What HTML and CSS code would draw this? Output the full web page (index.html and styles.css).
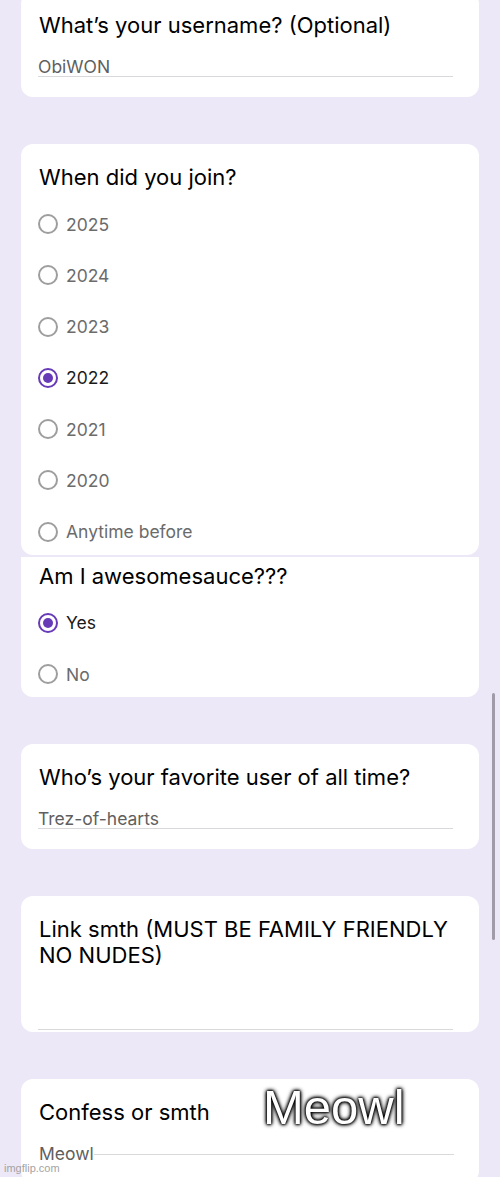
FILE: index.html
```html
<!DOCTYPE html>
<html lang="en">
<head>
    <meta charset="utf-8">
    <title>Form responses</title>
    <link rel="stylesheet" href="styles.css">
</head>
<body>
    <div class="page">
        <div class="card first">
            <div class="card-title">What’s your username? (Optional)</div>
            <div class="text-answer">ObiWON</div>
        </div>

        <div class="card cut-bottom">
            <div class="card-title">When did you join?</div>
            <div class="options">
                <div class="option"><span class="radio"></span>2025</div>
                <div class="option"><span class="radio"></span>2024</div>
                <div class="option"><span class="radio"></span>2023</div>
                <div class="option checked"><span class="radio"></span>2022</div>
                <div class="option"><span class="radio"></span>2021</div>
                <div class="option"><span class="radio"></span>2020</div>
                <div class="option"><span class="radio"></span>Anytime before</div>
            </div>
        </div>

        <div class="card cut-top">
            <div class="card-title">Am I awesomesauce???</div>
            <div class="options">
                <div class="option checked"><span class="radio"></span>Yes</div>
                <div class="option"><span class="radio"></span>No</div>
            </div>
        </div>

        <div class="card">
            <div class="card-title">Who’s your favorite user of all time?</div>
            <div class="text-answer">Trez-of-hearts</div>
        </div>

        <div class="card empty">
            <div class="card-title">Link smth (MUST BE FAMILY FRIENDLY NO NUDES)</div>
            <div class="text-answer"></div>
        </div>

        <div class="card">
            <div class="card-title">Confess or smth</div>
            <div class="inline-answer">
                <span class="inline-text">Meowl</span>
                <span class="inline-line"></span>
            </div>
            <div class="caption">Meowl</div>
        </div>
    </div>

    <div class="scrollbar"></div>
    <div class="watermark">imgflip.com</div>
</body>
</html>
```

FILE: styles.css
```css
body {
    margin: 0;
    height: 1177px;
    overflow: hidden;
    background-color: #ede8f7;
    font-family: Inter, 'Noto Sans', sans-serif;
    color: #000;
}

.page {
    padding: 0 21px;
}

.card {
    position: relative;
    background-color: #fff;
    border-radius: 12px;
    padding: 20px 20px 20px 18px;
    margin-bottom: 47px;
}

.card.first {
    margin-top: -8px;
}

.card.cut-bottom {
    padding-bottom: 11px;
    margin-bottom: 2px;
}

.card.cut-top {
    border-radius: 0 0 12px 12px;
    padding-top: 6px;
    padding-bottom: 11px;
}

.card.empty {
    padding-bottom: 2px;
}

.card-title {
    font-size: 22px;
    line-height: 26px;
    color: #000;
    margin-bottom: 20px;
}

.card.empty .card-title {
    margin-bottom: 43px;
}

.text-answer {
    width: 415px;
    font-size: 17.5px;
    line-height: 18px;
    min-height: 18px;
    color: #5f5f5f;
    border-bottom: 1px solid #d9d9dc;
    margin-left: -1px;
}

.inline-answer {
    width: 415px;
    display: flex;
    align-items: flex-end;
    font-size: 17.5px;
    line-height: 18px;
    color: #5f5f5f;
}

.inline-line {
    flex: 1;
    border-bottom: 1px solid #d9d9dc;
    margin-bottom: 8px;
}

.options {
    display: flex;
    flex-direction: column;
    gap: 27.3px;
    padding-top: 2px;
}

.option {
    display: flex;
    align-items: center;
    gap: 8px;
    height: 24px;
    font-size: 17.5px;
    color: #6b6b6b;
}

.option.checked {
    color: #1a1a1a;
}

.radio {
    width: 20px;
    height: 20px;
    box-sizing: border-box;
    border: 2px solid #9e9e9e;
    border-radius: 50%;
    display: flex;
    align-items: center;
    justify-content: center;
    margin-left: -1px;
}

.option.checked .radio {
    border-color: #673ab7;
}

.option.checked .radio::after {
    content: '';
    width: 10px;
    height: 10px;
    border-radius: 50%;
    background-color: #673ab7;
}

.caption {
    position: absolute;
    left: 242px;
    top: 0;
    font-family: 'Liberation Sans', Arial, sans-serif;
    font-size: 49px;
    color: #fff;
    text-shadow: 0 0 2px #000, 0 0 3px #000, 0 0 4px #000, 0 0 5px #000;
}

.scrollbar {
    position: absolute;
    left: 492px;
    top: 693px;
    width: 3px;
    height: 247px;
    border-radius: 2px;
    background-color: #a09aa9;
}

.watermark {
    position: absolute;
    left: 4px;
    top: 1162px;
    font-family: 'Liberation Sans', Arial, sans-serif;
    font-size: 11px;
    color: #a3a3a3;
}
```
